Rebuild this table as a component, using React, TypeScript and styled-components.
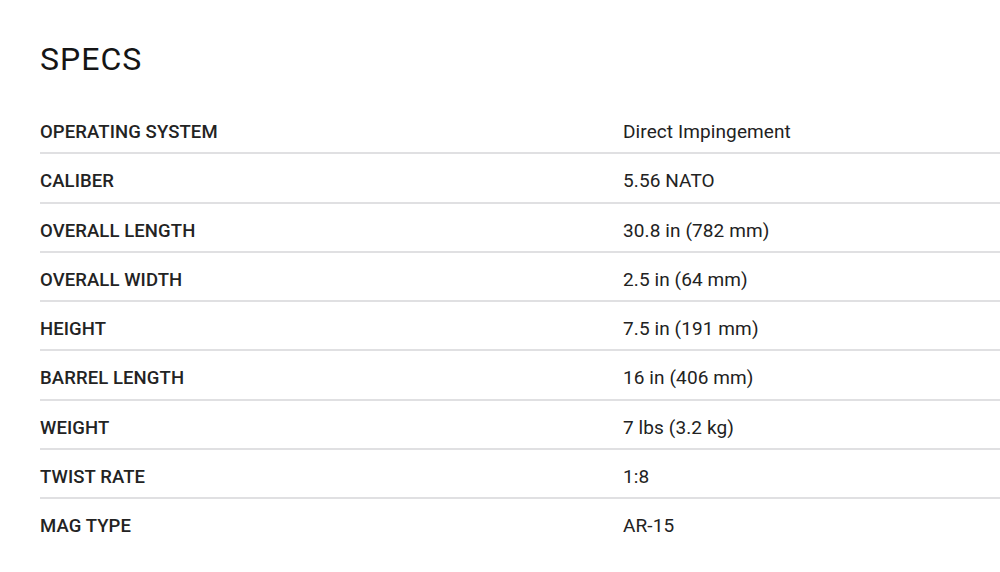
import React from "react";
import styled, { createGlobalStyle } from "styled-components";

const GlobalStyle = createGlobalStyle`
  html, body {
    margin: 0;
    padding: 0;
    background: #ffffff;
  }
  body {
    font-family: Roboto, "Liberation Sans", Arial, sans-serif;
    color: #1b1b1b;
    -webkit-font-smoothing: antialiased;
  }
`;

const Page = styled.section`
  width: 1000px;
  height: 572px;
  box-sizing: border-box;
  padding: 41px 0 0 40px;
  overflow: hidden;
  background: #ffffff;
`;

const Title = styled.h2`
  margin: 0 0 28px 0;
  font-family: Roboto, "Liberation Sans", Arial, sans-serif;
  font-size: 32px;
  line-height: 36px;
  font-weight: 400;
  letter-spacing: 1px;
  color: #151515;
`;

const Table = styled.dl`
  margin: 0;
  display: flex;
  flex-direction: column;
`;

const Row = styled.div<{ $last?: boolean }>`
  display: grid;
  grid-template-columns: 583px 1fr;
  align-items: start;
  box-sizing: border-box;
  height: 49.3px;
  padding-top: 16px;
  border-bottom: ${(p) => (p.$last ? "none" : "2px solid #e0e0e2")};
`;

const Label = styled.dt`
  margin: 0;
  font-size: 18.5px;
  line-height: 22px;
  font-weight: 500;
  letter-spacing: 0.1px;
  text-transform: uppercase;
  color: #232323;
`;

const Value = styled.dd`
  margin: 0;
  font-size: 19px;
  line-height: 22px;
  font-weight: 400;
  letter-spacing: 0.1px;
  color: #222222;
`;

const specs: [string, string][] = [
  ["Operating System", "Direct Impingement"],
  ["Caliber", "5.56 NATO"],
  ["Overall Length", "30.8 in (782 mm)"],
  ["Overall Width", "2.5 in (64 mm)"],
  ["Height", "7.5 in (191 mm)"],
  ["Barrel Length", "16 in (406 mm)"],
  ["Weight", "7 lbs (3.2 kg)"],
  ["Twist Rate", "1:8"],
  ["Mag Type", "AR-15"],
];

export default function App() {
  return (
    <>
      <GlobalStyle />
      <Page>
        <Title>SPECS</Title>
        <Table>
          {specs.map(([label, value], i) => (
            <Row key={label} $last={i === specs.length - 1}>
              <Label>{label}</Label>
              <Value>{value}</Value>
            </Row>
          ))}
        </Table>
      </Page>
    </>
  );
}
